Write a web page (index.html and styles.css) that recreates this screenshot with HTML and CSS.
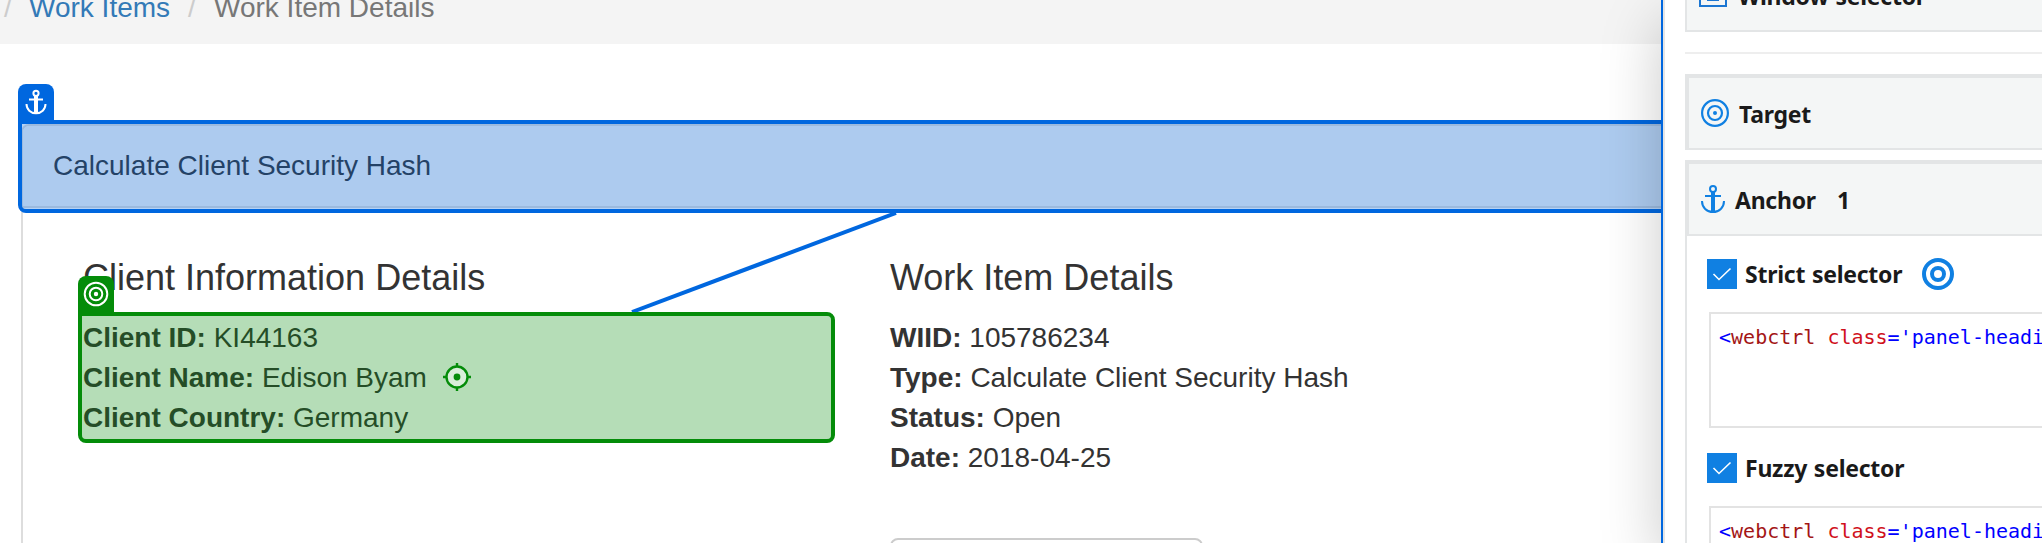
FILE: index.html
```html
<!DOCTYPE html>
<html lang="en">
<head>
<meta charset="utf-8">
<title>Work Item Details</title>
<link rel="stylesheet" href="styles.css">
</head>
<body>
<div class="screen">
  <main class="page">
    <nav class="breadcrumb"><span class="sep">/</span><a class="link">Work Items</a><span class="sep">/</span><span class="current">Work Item Details</span></nav>
    <section class="panel">
      <div class="panel-heading">Calculate Client Security Hash</div>
      <div class="panel-body">
        <div class="column">
          <h4>Client Information Details</h4>
          <p><b>Client ID:</b> KI44163</p>
          <p><b>Client Name:</b> Edison Byam</p>
          <p><b>Client Country:</b> Germany</p>
        </div>
        <div class="column">
          <h4>Work Item Details</h4>
          <p><b>WIID:</b> 105786234</p>
          <p><b>Type:</b> Calculate Client Security Hash</p>
          <p><b>Status:</b> Open</p>
          <p><b>Date:</b> 2018-04-25</p>
          <div class="button"></div>
        </div>
      </div>
    </section>
    <div class="mark mark-anchor">
      <svg class="badge" viewBox="0 0 36 36" fill="none" stroke="#fff" stroke-width="2"><circle cx="18" cy="9.3" r="2.6"/><path d="M11 15.4h14M8.5 20c0 5.500 4.200 9.300 9.500 9.300s9.500-3.800 9.500-9.300"/><path d="M18 12v17.500" stroke-width="4"/></svg>
    </div>
    <div class="mark mark-target">
      <svg class="badge" viewBox="0 0 36 36" fill="none" stroke="#fff" stroke-width="2"><circle cx="18" cy="18" r="11.300"/><circle cx="18" cy="18" r="6.300"/><circle cx="18" cy="18" r="2.200" fill="#fff" stroke="none"/></svg>
      <svg class="crosshair" viewBox="0 0 28 28" fill="none" stroke="#048c09" stroke-width="2.400"><circle cx="14" cy="14" r="10.500" fill="#d9eeda"/><path d="M14 0v4M14 24v4M0 14h4M24 14h4"/><circle cx="14" cy="14" r="3.400" fill="#048c09" stroke="none"/></svg>
    </div>
    <svg class="connector" viewBox="0 0 268 99"><path d="M2 99L266 0" stroke="#0067df" stroke-width="4"/></svg>
  </main>
  <aside class="inspector">
    <div class="card card-window">
      <svg class="icon icon-window" viewBox="0 0 28 28" fill="none" stroke="#1b76d2" stroke-width="2"><path d="M1 1h26v26H1zM9 9h10v12H9z"/></svg>
      <span class="title t-window">Window selector</span>
    </div>
    <div class="divider"></div>
    <div class="card card-target">
      <div class="card-head">
        <svg class="icon" viewBox="0 0 28 28" fill="none" stroke="#1080e2" stroke-width="2.200"><circle cx="14" cy="14" r="12.900"/><circle cx="14" cy="14" r="7"/><circle cx="14" cy="14" r="2" fill="#1080e2" stroke="none"/></svg>
        <span class="title t-target">Target</span>
      </div>
    </div>
    <div class="card card-anchor">
      <div class="card-head">
        <svg class="icon icon-anchor" viewBox="0 0 24 28" fill="none" stroke="#1080e2" stroke-width="2"><circle cx="12" cy="4" r="3"/><path d="M4 11h16M1 16c0 6.500 4.800 11 11 11s11-4.500 11-11"/><path d="M12 7v20" stroke-width="4"/></svg>
        <span class="title t-anchor">Anchor</span><span class="title count">1</span>
      </div>
      <div class="selector">
        <div class="selector-row">
          <svg class="check" viewBox="0 0 30 30"><path d="M6.500 15l5.500 5.500L23.500 9.500" fill="none" stroke="#fff" stroke-width="1.600"/></svg>
          <span class="title t-strict">Strict selector</span>
          <svg class="eye" viewBox="0 0 32 32" fill="none" stroke="#1080e2" stroke-width="4"><circle cx="16" cy="16" r="14"/><circle cx="16" cy="16" r="6"/></svg>
        </div>
        <div class="code"><i>&lt;</i><span class="tag">webctrl</span> <span class="attr">class</span><i>='panel-heading'</i></div>
      </div>
      <div class="selector">
        <div class="selector-row">
          <svg class="check" viewBox="0 0 30 30"><path d="M6.500 15l5.500 5.500L23.500 9.500" fill="none" stroke="#fff" stroke-width="1.600"/></svg>
          <span class="title t-fuzzy">Fuzzy selector</span>
        </div>
        <div class="code"><i>&lt;</i><span class="tag">webctrl</span> <span class="attr">class</span><i>='panel-heading'</i></div>
      </div>
    </div>
  </aside>
</div>
</body>
</html>
```

FILE: styles.css
```css
* { box-sizing: border-box; }
body { margin: 0; overflow: hidden; background: #fff; }
.screen { display: flex; width: 2042px; height: 543px; overflow: hidden; }

.page {
  position: relative;
  width: 1661px;
  height: 543px;
  overflow: hidden;
  font: 28px/40px "Liberation Sans", Arial, sans-serif;
  color: #333;
}
.breadcrumb {
  display: flex;
  height: 44px;
  padding-left: 4px;
  background: #f4f4f4;
  color: #777;
}
.breadcrumb > * { margin-top: -12px; }
.sep { width: 25px; color: #ccc; }
.link { width: 159px; color: #337ab7; }
.current { margin-left: 1px; }
.panel {
  width: 1700px;
  height: 480px;
  margin: 80px 0 0 21px;
  border: 2px solid #ddd;
  border-radius: 8px;
}
.panel-heading {
  height: 82px;
  padding: 20px 29px 18px 30px;
  background: #f5f5f5;
  border-bottom: 2px solid #ddd;
  border-radius: 6px 6px 0 0;
}
.panel-body { display: flex; padding: 50px 0 0 60px; }
.column { width: 807px; }
.column h4 { margin: 0 0 20px; font-size: 36px; font-weight: 400; line-height: 40px; }
.column p { margin: 0; white-space: nowrap; }
.button { width: 313px; height: 68px; margin-top: 60px; border: 2px solid #ccc; border-radius: 8px; }

/* Element highlights drawn over the page */
.mark { position: absolute; border: 4px solid; border-radius: 0 8px 8px 8px; }
.badge { position: absolute; left: -4px; top: -40px; width: 36px; height: 36px; border-radius: 8px 8px 0 0; }
.mark-anchor { left: 18px; top: 120px; width: 1700px; height: 93px; border-color: #0067df; background: rgba(0, 103, 223, .294); background-clip: padding-box; }
.mark-anchor .badge { background: #0067df; }
.mark-target { left: 78px; top: 312px; width: 757px; height: 131px; border-color: #048c09; background: rgba(4, 140, 9, .294); background-clip: padding-box; }
.mark-target .badge { background: #048c09; }
.crosshair { position: absolute; left: 361px; top: 47px; width: 28px; height: 28px; }
.connector { position: absolute; left: 630px; top: 213px; width: 268px; height: 99px; }

.inspector {
  position: relative;
  width: 381px;
  height: 543px;
  padding-left: 20px;
  background: #fff;
  border-left: 2px solid #0067df;
  box-shadow: inset 2px 0 #e4e5e6, 0 20px 56px rgba(0, 0, 0, .21);
}
.card { width: 400px; margin-left: 2px; border-left: 2px solid #e3e5e6; }
.card-window { display: flex; height: 32px; padding-left: 12px; background: #f4f6f6; border-bottom: 2px solid #e3e5e6; }
.divider { height: 2px; margin: 20px 0 20px 2px; background: #eee; }
.card-target, .card-anchor { border-top: 2px solid #e3e5e6; }
.card-anchor { height: 500px; margin-top: 10px; }
.card-head {
  display: flex;
  height: 74px;
  padding: 21px 0 0 12px;
  background: #f4f6f6;
  border: 2px solid #e3e5e6;
}
.icon { flex: none; width: 28px; height: 28px; }
.icon-window { margin-top: -21px; }
.icon-anchor { width: 24px; }
.title { height: 32px; margin-top: -1px; font: 700 23px/32px "Noto Sans", "Open Sans", sans-serif; letter-spacing: -.25px; word-spacing: 1px; color: #1a1a1a; white-space: nowrap; }
.t-window { margin: -20px 0 0 11px; }
.t-target { margin-left: 10px; }
.t-anchor { width: 102px; margin-left: 10px; }
.selector { padding-left: 20px; }
.selector-row { display: flex; height: 30px; margin-top: 23px; }
.selector + .selector .selector-row { margin-top: 25px; }
.check { flex: none; width: 30px; height: 30px; background: #1080e2; }
.t-strict, .t-fuzzy { margin-left: 8px; }
.t-strict { width: 158px; }
.eye { width: 32px; height: 32px; margin: -1px 0 0 19px; }
.code {
  width: 380px;
  height: 116px;
  margin: 23px 0 0 2px;
  padding: 7px 8px;
  border: 2px solid #e3e3e3;
  font: 20px/32px "DejaVu Sans Mono", monospace;
  white-space: pre;
  overflow: hidden;
  color: #00f;
}
.code i { font-style: normal; }
.tag { color: #a31515; }
.attr { color: #d0101c; }
```
